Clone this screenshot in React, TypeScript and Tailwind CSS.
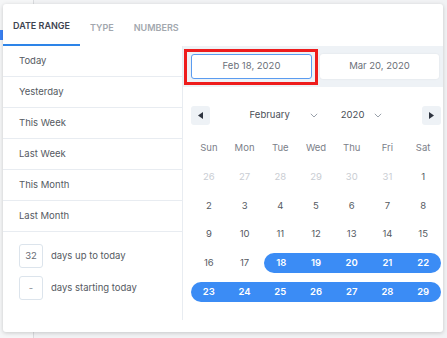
import React from "react";

const weekdays = ["Sun", "Mon", "Tue", "Wed", "Thu", "Fri", "Sat"];
type Day = { d: number; muted?: boolean; sel?: boolean };
const weeks: Day[][] = [
  [{ d: 26, muted: true }, { d: 27, muted: true }, { d: 28, muted: true }, { d: 29, muted: true }, { d: 30, muted: true }, { d: 31, muted: true }, { d: 1 }],
  [2, 3, 4, 5, 6, 7, 8].map((d) => ({ d })),
  [9, 10, 11, 12, 13, 14, 15].map((d) => ({ d })),
  [16, 17].map((d) => ({ d } as Day)).concat([18, 19, 20, 21, 22].map((d) => ({ d, sel: true }))),
  [23, 24, 25, 26, 27, 28, 29].map((d) => ({ d, sel: true })),
];

const presets = ["Today", "Yesterday", "This Week", "Last Week", "This Month", "Last Month"];

function Tri({ dir }: { dir: "l" | "r" }) {
  return (
    <svg width="5" height="7" viewBox="0 0 5 7">
      {dir === "l" ? <path d="M5 0 L0 3.5 L5 7 Z" fill="#2f3540" /> : <path d="M0 0 L5 3.5 L0 7 Z" fill="#2f3540" />}
    </svg>
  );
}

function Chevron() {
  return (
    <svg width="8" height="5" viewBox="0 0 8 5">
      <path d="M0.8 0.8 L4 4 L7.2 0.8" fill="none" stroke="#9aa1ab" strokeWidth="1" />
    </svg>
  );
}

export default function App() {
  return (
    <div
      className="relative w-[447px] h-[338px] overflow-hidden bg-[#f1f2f4]"
      style={{ fontFamily: "Inter, 'Noto Sans', sans-serif" }}
    >
      <div className="absolute left-0 top-0 h-full w-[34px] border-r border-[#d9dbde] bg-[#f5f6f7]" />
      <div className="absolute left-0 top-[30px] h-[10px] w-[3px] bg-[#3b82f6]" />

      <div className="absolute left-[3px] top-[4px] w-[440px] h-[328px] bg-white rounded-[3px] shadow-[0_1px_4px_rgba(0,0,0,0.18)] flex flex-col">
        {/* tabs */}
        <div className="flex h-[42px] shrink-0 text-[9px] font-semibold">
          <div className="px-[10px] flex items-center border-b-2 border-[#2d84e8] text-[#3d4350] pt-[4px]">DATE RANGE</div>
          <div className="px-[10px] flex items-center text-[#a2a7ae] pt-[6px]">TYPE</div>
          <div className="px-[10px] flex items-center text-[#a2a7ae] pt-[6px]">NUMBERS</div>
        </div>

        <div className="flex flex-1 pb-[12px]">
          {/* left column */}
          <div className="w-[180px] shrink-0 border-r border-[#e8ecf1] flex flex-col text-[9.5px] text-[#555a62]">
            {presets.map((p) => (
              <div key={p} className="h-[31px] flex items-center pl-[16px] pt-[1px] border-b border-[#e8ecf1]">
                {p}
              </div>
            ))}
            <div className="flex flex-col gap-[8px] pl-[16px] pt-[12px]">
              <div className="flex items-center">
                <div className="w-[24px] h-[24px] border border-[#dce4ec] rounded-[3px] flex items-center justify-center text-[#666b73]">32</div>
                <span className="ml-[8px]">days up to today</span>
              </div>
              <div className="flex items-center">
                <div className="w-[24px] h-[24px] border border-[#dce4ec] rounded-[3px] flex items-center justify-center text-[#8a8f96]">-</div>
                <span className="ml-[8px]">days starting today</span>
              </div>
            </div>
          </div>

          {/* right column */}
          <div className="flex-1 flex flex-col">
            <div className="h-[41px] bg-[#eef2f6] flex pl-[8px] pr-[3px] pt-[8px] gap-[8px] text-[9.5px] text-[#6b7079]">
              <div className="relative w-[121px] h-[25px]">
                <div className="w-full h-full bg-white border border-[#5b9cf0] rounded-[3px] flex items-center justify-center">Feb 18, 2020</div>
                <div className="absolute -left-[7px] -top-[5px] -right-[6px] -bottom-[6px] border-[3px] border-[#ee1c1c] pointer-events-none" />
              </div>
              <div className="w-[119px] h-[25px] bg-white rounded-[3px] shadow-[0_0_2px_rgba(0,0,0,0.08)] flex items-center justify-center">Mar 20, 2020</div>
            </div>

            <div className="pl-[8px] pr-[2px] pt-[19px] text-[9.5px]">
              <div className="flex items-center justify-between h-[19px]">
                <div className="w-[19px] h-[19px] rounded-[3px] bg-[#eef2f6] flex items-center justify-center"><Tri dir="l" /></div>
                <div className="flex items-center text-[#4a4f57] text-[9.5px]">
                  <span>February</span>
                  <span className="ml-[20px]"><Chevron /></span>
                  <span className="ml-[23px]">2020</span>
                  <span className="ml-[10px]"><Chevron /></span>
                </div>
                <div className="w-[19px] h-[19px] rounded-[3px] bg-[#eef2f6] flex items-center justify-center"><Tri dir="r" /></div>
              </div>

              <div className="mt-[9px] grid grid-cols-7 h-[28.7px] items-center text-[#7b8089]">
                {weekdays.map((w) => (
                  <div key={w} className="text-center">{w}</div>
                ))}
              </div>
              {weeks.map((wk, i) => (
                <div key={i} className="grid grid-cols-7 h-[28.7px] items-center">
                  {wk.map((day, j) => {
                    const prevSel = j > 0 && wk[j - 1].sel;
                    const nextSel = j < 6 && wk[j + 1].sel;
                    const inset = day.sel && !prevSel && j > 0 ? "ml-[2px]" : "";
                    const cls = day.sel
                      ? `h-[20px] bg-[#3b8cf5] text-white font-semibold ${inset} ${prevSel ? "" : "rounded-l-full"} ${nextSel ? "" : "rounded-r-full"}`
                      : `h-[20px] ${day.muted ? "text-[#c9cdd3]" : "text-[#555a62]"}`;
                    return (
                      <div key={j} className={`flex items-center justify-center ${cls}`}>{day.d}</div>
                    );
                  })}
                </div>
              ))}
            </div>
          </div>
        </div>
      </div>
    </div>
  );
}
